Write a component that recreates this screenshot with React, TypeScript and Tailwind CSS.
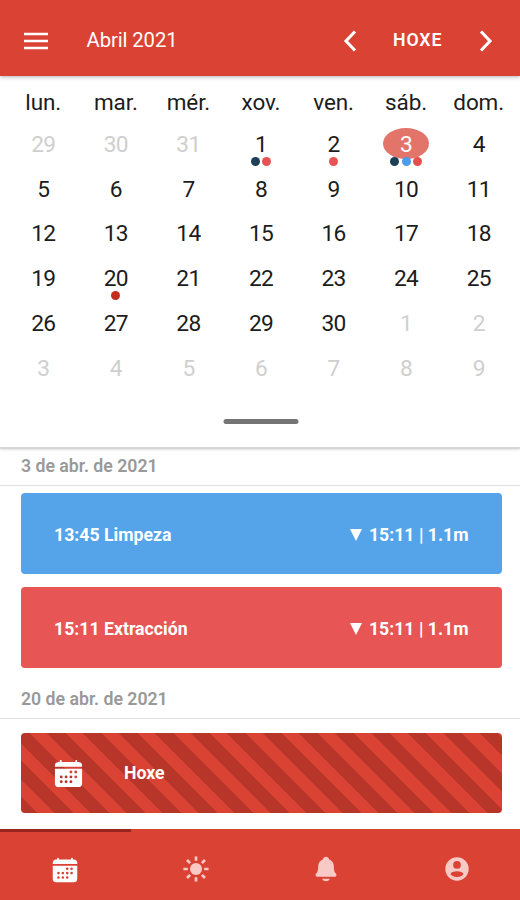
import React from 'react';
import clsx from 'clsx';
import { IoCalendar, IoNotifications } from 'react-icons/io5';

const WEEKDAYS = ['lun.', 'mar.', 'mér.', 'xov.', 'ven.', 'sáb.', 'dom.'];

const DAYS = [
  29, 30, 31, 1, 2, 3, 4,
  5, 6, 7, 8, 9, 10, 11,
  12, 13, 14, 15, 16, 17, 18,
  19, 20, 21, 22, 23, 24, 25,
  26, 27, 28, 29, 30, 1, 2,
  3, 4, 5, 6, 7, 8, 9,
];

// Event markers, keyed by position in DAYS
const MARKERS: Record<number, string[]> = {
  3: ['bg-[#1d4056]', 'bg-[#e75354]'],
  4: ['bg-[#e75354]'],
  5: ['bg-[#1d4056]', 'bg-[#4b9ceb]', 'bg-[#e74f4d]'],
  22: ['bg-[#c32d1e]'],
};

function Header() {
  return (
    <header className="relative z-10 flex h-[76px] shrink-0 items-center bg-[#da4234] pt-[5px] text-white shadow-[0_1px_4px_rgba(0,0,0,0.3)]">
      <svg className="ml-6 h-[18px] w-6" viewBox="0 0 24 18" fill="none" stroke="currentColor" strokeWidth="2.5">
        <path d="M0 2h24M0 9h24M0 16h24" />
      </svg>
      <h1 className="ml-[38.5px] flex-1 pb-[2px] text-[20.3px] leading-6 tracking-[-0.1px]">Abril 2021</h1>
      <svg className="h-6 w-6" viewBox="0 0 24 24" fill="none" stroke="currentColor" strokeWidth="3.1">
        <path d="M18 2.5 9 12l9 9.5" />
      </svg>
      <span className="ml-[32px] w-[52px] text-[17.7px] font-semibold tracking-[0.9px]">HOXE</span>
      <svg className="mr-[21px] ml-[30px] h-6 w-6" viewBox="0 0 24 24" fill="none" stroke="currentColor" strokeWidth="3.1">
        <path d="m6 2.5 9 9.5-9 9.5" />
      </svg>
    </header>
  );
}

function Day({ index }: { index: number }) {
  const selected = index === 5;
  const outside = index < 3 || index > 32;
  return (
    <div className="relative flex h-[44.8px] items-center justify-center">
      <span
        className={clsx(
          'flex h-[31px] w-[46px] items-center justify-center rounded-[50%] text-[22.7px] tracking-[-0.7px]',
          selected && 'mb-[2px] bg-[#e2746a] pt-[2px] text-white',
          outside && 'text-[#cfcfcf]',
        )}
      >
        {DAYS[index]}
      </span>
      <div className="absolute top-[34px] flex gap-[2.5px]">
        {MARKERS[index]?.map((color) => (
          <i key={color} className={clsx('size-[9px] rounded-full', color)} />
        ))}
      </div>
    </div>
  );
}

function Calendar() {
  return (
    <section className="relative flex h-[373px] shrink-0 flex-col border-b-2 border-[#d6d6d6] pt-[11px] text-[#1c1c1c] shadow-[0_1px_2px_rgba(0,0,0,0.12)]">
      <div className="mr-[5px] ml-[7px] grid grid-cols-7 text-center text-[22.5px] leading-[30px] tracking-[-0.1px]">
        {WEEKDAYS.map((day) => (
          <span key={day}>{day}</span>
        ))}
      </div>
      <div className="mt-[5.5px] mr-[5px] ml-[7px] grid grid-cols-7">
        {DAYS.map((_, i) => (
          <Day key={i} index={i} />
        ))}
      </div>
      <div className="mx-auto mt-[27.5px] h-[5px] w-[75px] translate-x-[0.5px] rounded-full bg-[#757575]" />
    </section>
  );
}

function DateHeading({ children }: { children: React.ReactNode }) {
  return (
    <h2 className="h-[37px] border-b border-[#e2e2e2] pl-[21px] text-[17.7px] leading-[35px] font-semibold text-[#999]">
      {children}
    </h2>
  );
}

function Tide({ title, color }: { title: string; color: string }) {
  return (
    <article className={clsx('mr-[18.5px] ml-[21px] flex h-[81px] items-center justify-between rounded-[4px] px-[33px] pt-[3px] text-[17.7px] font-bold text-white', color)}>
      <span>{title}</span>
      <span className="flex items-center">
        <svg className="mr-[7px] h-3 w-3" viewBox="0 0 12 12" fill="currentColor">
          <path d="M0 0h12L6 12z" />
        </svg>
        15:11 | 1.1m
      </span>
    </article>
  );
}

function SunIcon() {
  return (
    <svg className="size-7" viewBox="-14 -14 28 28" stroke="currentColor" strokeWidth="2.7">
      <circle r="6" fill="currentColor" stroke="none" />
      <path d="M0-12.6v4.4M0 8.2v4.4M-12.6 0h4.4M8.2 0h4.4M-9-9l3.1 3.1M5.9 5.9 9 9M-9 9l3.1-3.1M5.9-5.9 9-9" />
    </svg>
  );
}

function AccountIcon() {
  return (
    <svg className="size-7" viewBox="0 0 24 24" fill="currentColor">
      <path d="M12 2a10 10 0 1 0 0 20 10 10 0 0 0 0-20zm0 3.2a3.3 3.3 0 1 1 0 6.6 3.3 3.3 0 0 1 0-6.6zm0 13.6c-2.6 0-4.8-.9-5.6-2.3.5-1.7 2.8-2.5 5.6-2.5s5.1.8 5.6 2.5c-.8 1.4-3 2.3-5.6 2.3z" />
    </svg>
  );
}

function TabBar() {
  return (
    <nav className="relative -mr-0.5 grid h-[71px] shrink-0 grid-cols-4 place-items-center bg-[#da4234] pt-[9px] text-[#f8c9c5]">
      <span className="absolute top-0 left-0 h-[3px] w-[131px] bg-[#98261c]" />
      <IoCalendar className="mt-0.5 size-7 text-white" />
      <SunIcon />
      <IoNotifications className="size-7" />
      <AccountIcon />
    </nav>
  );
}

export default function App() {
  return (
    <div className="flex h-[900px] w-[520px] flex-col overflow-hidden bg-white font-['Roboto',sans-serif]">
      <Header />
      <Calendar />
      <main className="flex-1">
        <DateHeading>3 de abr. de 2021</DateHeading>
        <div className="mt-[7px] flex flex-col gap-[13px]">
          <Tide title="13:45 Limpeza" color="bg-[#55a4ea]" />
          <Tide title="15:11 Extracción" color="bg-[#e75554]" />
        </div>
        <div className="mt-[14px]">
          <DateHeading>20 de abr. de 2021</DateHeading>
        </div>
        <article className="mt-[14px] mr-[18.5px] ml-[21px] flex h-[80px] items-center rounded-[4px] bg-[repeating-linear-gradient(45deg,#b73629_0px,#b73629_11.5px,#da4234_11.5px,#da4234_24px,#b73629_24px,#b73629_25.46px)] pl-8 text-[17.7px] font-bold text-white">
          <IoCalendar className="size-[31px]" />
          <span className="ml-[40px] pt-px">Hoxe</span>
        </article>
      </main>
      <TabBar />
    </div>
  );
}
